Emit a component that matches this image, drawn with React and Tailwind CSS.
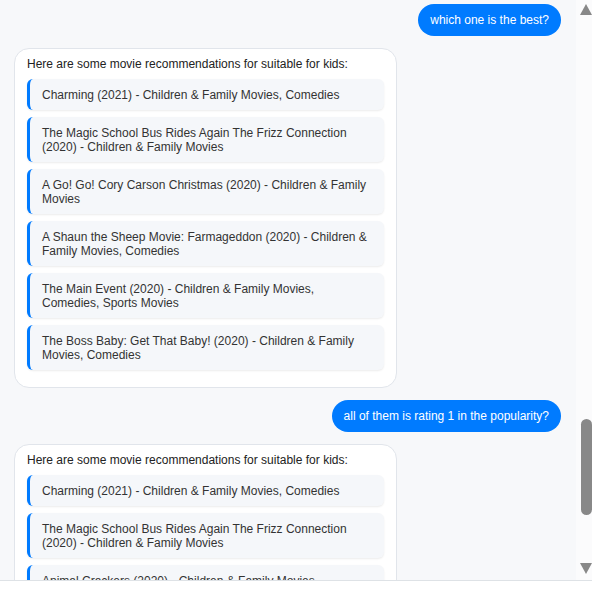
import React from "react";

const cardA = [
  "Charming (2021) - Children & Family Movies, Comedies",
  "The Magic School Bus Rides Again The Frizz Connection (2020) - Children & Family Movies",
  "A Go! Go! Cory Carson Christmas (2020) - Children & Family Movies",
  "A Shaun the Sheep Movie: Farmageddon (2020) - Children & Family Movies, Comedies",
  "The Main Event (2020) - Children & Family Movies, Comedies, Sports Movies",
  "The Boss Baby: Get That Baby! (2020) - Children & Family Movies, Comedies",
];

const cardB = [
  "Charming (2021) - Children & Family Movies, Comedies",
  "The Magic School Bus Rides Again The Frizz Connection (2020) - Children & Family Movies",
  "Animal Crackers (2020) - Children & Family Movies",
  "A Shaun the Sheep Movie: Farmageddon (2020) - Children & Family Movies, Comedies",
  "The Main Event (2020) - Children & Family Movies, Comedies, Sports Movies",
];

function UserBubble({ text }) {
  return (
    <div className="flex justify-end">
      <div className="rounded-[16px] bg-[#007bff] px-[12px] py-[9px] text-[12px] leading-[14px] text-white">
        {text}
      </div>
    </div>
  );
}

function BotCard({ items }) {
  return (
    <div className="flex justify-start">
      <div className="w-[383px] rounded-[15px] border border-[#e1e5eb] bg-white px-3 pt-2 pb-[10px] text-[12px] leading-[14px] text-[#222]">
        <div className="mb-2">Here are some movie recommendations for suitable for kids:</div>
        {items.map((t, i) => (
          <div
            key={i}
            className="mb-[7px] rounded-[6px] border-l-[3px] border-[#007bff] bg-[#f5f7fa] py-[8.5px] pl-[12px] pr-3 text-[#333] shadow-[0_1px_2px_rgba(0,0,0,0.08)]"
          >
            {t}
          </div>
        ))}
      </div>
    </div>
  );
}

export default function App() {
  return (
    <div
      className="flex h-[595px] w-[592px] flex-col overflow-hidden bg-white"
      style={{ fontFamily: '"Liberation Sans", Arial, sans-serif' }}
    >
      <div className="flex h-[580px] shrink-0">
        <div className="min-w-0 flex-1 overflow-hidden bg-[#f7f8fa]">
          <div className="flex flex-col gap-3 pl-[14px] pr-[15px] pt-[4px]">
            <UserBubble text="which one is the best?" />
            <BotCard items={cardA} />
            <UserBubble text="all of them is rating 1 in the popularity?" />
            <BotCard items={cardB} />
          </div>
        </div>
        <div className="flex w-4 shrink-0 flex-col bg-[#fbfbfc]">
          <div className="flex h-4 justify-start pl-[4px] pt-[4px]">
            <div className="h-0 w-0 border-l-[6px] border-r-[6px] border-b-[11px] border-l-transparent border-r-transparent border-b-[#888888]" />
          </div>
          <div className="ml-[5px] mt-[403px] h-[96px] w-[11px] rounded-[6px] bg-[#888888]" />
          <div className="mb-[6px] mt-auto flex justify-start pl-[4px]">
            <div className="h-0 w-0 border-l-[6px] border-r-[6px] border-t-[11px] border-l-transparent border-r-transparent border-t-[#888888]" />
          </div>
        </div>
      </div>
      <div className="h-[60px] shrink-0 border-t border-[#dee2e6] bg-white" />
    </div>
  );
}
